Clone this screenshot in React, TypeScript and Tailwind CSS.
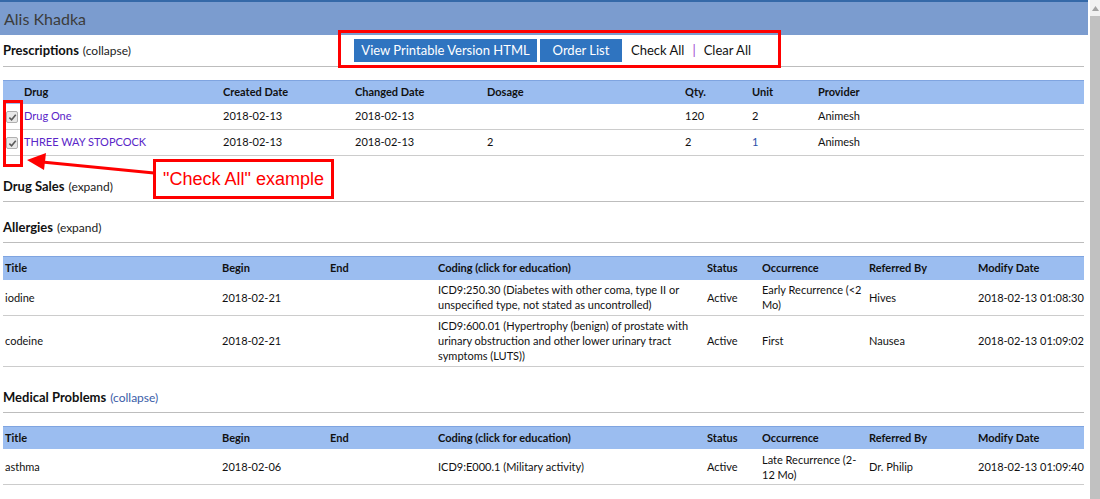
import React from "react"

type Col = { label: string; w: number }

const rxCols: Col[] = [
  { label: "", w: 19 },
  { label: "Drug", w: 199 },
  { label: "Created Date", w: 132 },
  { label: "Changed Date", w: 132 },
  { label: "Dosage", w: 198 },
  { label: "Qty.", w: 67 },
  { label: "Unit", w: 66 },
  { label: "Provider", w: 268 },
]

const issueCols: Col[] = [
  { label: "Title", w: 217 },
  { label: "Begin", w: 108 },
  { label: "End", w: 108 },
  { label: "Coding (click for education)", w: 269 },
  { label: "Status", w: 55 },
  { label: "Occurrence", w: 107 },
  { label: "Referred By", w: 109 },
  { label: "Modify Date", w: 108 },
]

const allergies = [
  {
    title: "iodine",
    begin: "2018-02-21",
    coding: ["ICD9:250.30 (Diabetes with other coma, type II or", "unspecified type, not stated as uncontrolled)"],
    status: "Active",
    occurrence: ["Early Recurrence (<2", "Mo)"],
    referred: "Hives",
    modified: "2018-02-13 01:08:30",
  },
  {
    title: "codeine",
    begin: "2018-02-21",
    coding: [
      "ICD9:600.01 (Hypertrophy (benign) of prostate with",
      "urinary obstruction and other lower urinary tract",
      "symptoms (LUTS))",
    ],
    status: "Active",
    occurrence: ["First"],
    referred: "Nausea",
    modified: "2018-02-13 01:09:02",
  },
]

const problems = [
  {
    title: "asthma",
    begin: "2018-02-06",
    coding: ["ICD9:E000.1 (Military activity)"],
    status: "Active",
    occurrence: ["Late Recurrence (2-", "12 Mo)"],
    referred: "Dr. Philip",
    modified: "2018-02-13 01:09:40",
  },
]

function Check() {
  return (
    <span className="inline-flex w-[12px] h-[12px] items-center justify-center rounded-[2px] border border-[#b0b0b0] bg-[#e8e8e8] align-middle">
      <svg width="9" height="9" viewBox="0 0 10 10">
        <path d="M1.5 5.2 L4 7.6 L8.6 2" fill="none" stroke="#5a5a5a" strokeWidth="1.8" />
      </svg>
    </span>
  )
}

function Section({ title, action, actionClass = "text-[#222]" }: { title: string; action: string; actionClass?: string }) {
  return (
    <div className="h-[41px] pt-[12px] flex items-center gap-[4px] border-b border-[#bdbdbd]">
      <span className="text-[13px] font-bold text-[#111]">{title}</span>
      <span className={`text-[12px] ${actionClass}`}>({action})</span>
    </div>
  )
}

function HeadRow({ cols }: { cols: Col[] }) {
  return (
    <tr className="h-[23px] bg-[#9bbdf0] border-t border-[#7fa4e0]">
      {cols.map((c, i) => (
        <th key={i} className="px-[2px] text-left font-bold text-[11px] text-[#111]">
          {c.label}
        </th>
      ))}
    </tr>
  )
}

function IssueTable({ rows }: { rows: typeof allergies }) {
  return (
    <table className="table-fixed border-collapse w-[1081px] mt-[13px] mb-[5px]">
      <colgroup>
        {issueCols.map((c, i) => (
          <col key={i} style={{ width: c.w }} />
        ))}
      </colgroup>
      <thead>
        <HeadRow cols={issueCols} />
      </thead>
      <tbody className="text-[11px] leading-[15px] text-[#111]">
        {rows.map((r) => (
          <tr key={r.title} className="border-b border-[#cccccc]">
            <td className="px-[2px] py-[2.5px]">{r.title}</td>
            <td className="px-[2px] py-[2.5px]">{r.begin}</td>
            <td className="px-[2px] py-[2.5px]"></td>
            <td className="px-[2px] py-[2.5px]">
              {r.coding.map((l, i) => (
                <div key={i} className="whitespace-nowrap">{l}</div>
              ))}
            </td>
            <td className="px-[2px] py-[2.5px]">{r.status}</td>
            <td className="px-[2px] py-[2.5px]">
              {r.occurrence.map((l, i) => (
                <div key={i} className="whitespace-nowrap">{l}</div>
              ))}
            </td>
            <td className="px-[2px] py-[2.5px]">{r.referred}</td>
            <td className="px-[2px] py-[2.5px] whitespace-nowrap">{r.modified}</td>
          </tr>
        ))}
      </tbody>
    </table>
  )
}

export default function App() {
  return (
    <div className="w-[1100px] h-[499px] overflow-hidden flex bg-white" style={{ fontFamily: "Lato, 'Open Sans', sans-serif" }}>
      <div className="relative w-[1090px]">
        {/* TOP BAR */}
        <div className="w-[1088px] h-[35px] bg-[#7b9ccf] border-t-2 border-[#3569a8] flex items-center px-[4px]">
          <span className="text-[16px] text-[#3c3c3c]">Alis Khadka</span>
        </div>

        <div className="ml-[3px] w-[1081px]">
          {/* PRESCRIPTIONS */}
          <div className="h-[32px] flex items-center border-b border-[#bdbdbd]">
            <div className="w-[351px] flex items-center gap-[4px]">
              <span className="text-[13px] font-bold text-[#111]">Prescriptions</span>
              <span className="text-[12px] text-[#222]">(collapse)</span>
            </div>
            <div className="flex items-center gap-[3px] text-[13px]">
              <div className="h-[23px] w-[183px] bg-[#2f74c0] text-white flex items-center justify-center">View Printable Version HTML</div>
              <div className="h-[23px] w-[82px] bg-[#2f74c0] text-white flex items-center justify-center">Order List</div>
              <span className="ml-[6px] text-[#111]">Check All</span>
              <span className="mx-[5px] text-[#a040d0]">|</span>
              <span className="text-[#111]">Clear All</span>
            </div>
          </div>

          <table className="table-fixed border-collapse w-[1081px] mt-[13px] mb-[5px]">
            <colgroup>
              {rxCols.map((c, i) => (
                <col key={i} style={{ width: c.w }} />
              ))}
            </colgroup>
            <thead>
              <HeadRow cols={rxCols} />
            </thead>
            <tbody className="text-[11px] text-[#111]">
              <tr className="h-[26px] border-b border-[#cccccc]">
                <td className="pl-[3px]"><Check /></td>
                <td className="px-[2px] text-[#5a26c8]">Drug One</td>
                <td className="px-[2px]">2018-02-13</td>
                <td className="px-[2px]">2018-02-13</td>
                <td className="px-[2px]"></td>
                <td className="px-[2px]">120</td>
                <td className="px-[2px]">2</td>
                <td className="px-[2px]">Animesh</td>
              </tr>
              <tr className="h-[26px] border-b border-[#cccccc]">
                <td className="pl-[3px]"><Check /></td>
                <td className="px-[2px] text-[#5a26c8]">THREE WAY STOPCOCK</td>
                <td className="px-[2px]">2018-02-13</td>
                <td className="px-[2px]">2018-02-13</td>
                <td className="px-[2px]">2</td>
                <td className="px-[2px]">2</td>
                <td className="px-[2px] text-[#2a4fa8]">1</td>
                <td className="px-[2px]">Animesh</td>
              </tr>
            </tbody>
          </table>

          <Section title="Drug Sales" action="expand" />
          <Section title="Allergies" action="expand" />
          <IssueTable rows={allergies} />
          <Section title="Medical Problems" action="collapse" actionClass="text-[#3a5ca8]" />
          <IssueTable rows={problems} />
        </div>

        {/* ANNOTATIONS */}
        <div className="absolute left-[338px] top-[30px] w-[443px] h-[38px] border-[3px] border-[#ff0000]" />
        <div className="absolute left-[3px] top-[100px] w-[20px] h-[67px] border-[3px] border-[#ff0000]" />
        <svg className="absolute left-0 top-0" width="160" height="200">
          <line x1="154" y1="173" x2="42" y2="162" stroke="#ff0000" strokeWidth="3" />
          <polygon points="27,160 46,153 44,170" fill="#ff0000" />
        </svg>
        <div className="absolute left-[153px] top-[159px] w-[181px] h-[40px] border-[3px] border-[#ff0000] bg-white flex items-center justify-center text-[18px] text-[#ff0000]" style={{ fontFamily: "'Liberation Sans', Arial, sans-serif" }}>
          "Check All" example
        </div>
      </div>

      {/* SCROLLBAR */}
      <div className="w-[10px] flex flex-col bg-[#f1f1f1]">
        <div className="h-[16px] flex items-center justify-center">
          <svg width="7" height="5" viewBox="0 0 7 5"><polygon points="3.5,0 7,5 0,5" fill="#a3a3a3" /></svg>
        </div>
        <div className="flex-1 bg-[#c1c1c1]" />
      </div>
    </div>
  )
}
